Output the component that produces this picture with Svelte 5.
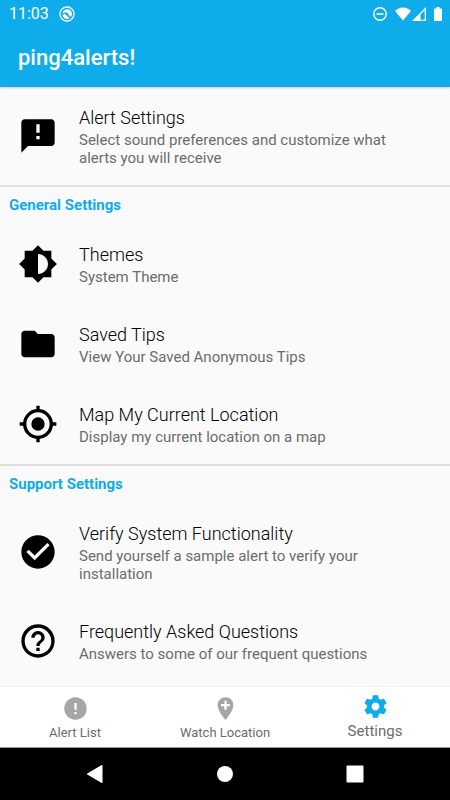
<script lang="ts">
    type Item = { icon: string; title: string; text: string };

    // Icon paths, all drawn on a 24x24 grid
    const icons: Record<string, string> = {
        feedback: 'M20 2H4c-1.1 0-2 .9-2 2v18l4-4h14c1.1 0 2-.9 2-2V4c0-1.1-.9-2-2-2zm-7 12h-2v-2h2v2zm0-4h-2V5h2v5z',
        theme: 'M20 15.31L23.31 12 20 8.69V4h-4.69L12 .69 8.69 4H4v4.69L.69 12 4 15.31V20h4.69L12 23.31 15.31 20H20v-4.69zM12 18V6c3.31 0 6 2.69 6 6s-2.69 6-6 6z',
        folder: 'M10 4H4c-1.1 0-1.99.9-1.99 2L2 18c0 1.1.9 2 2 2h16c1.1 0 2-.9 2-2V8c0-1.1-.9-2-2-2h-8l-2-2z',
        location: 'M12 8a4 4 0 1 0 0 8 4 4 0 0 0 0-8zm8.94 3A8.994 8.994 0 0 0 13 3.06V1h-2v2.06A8.994 8.994 0 0 0 3.06 11H1v2h2.06A8.994 8.994 0 0 0 11 20.94V23h2v-2.06A8.994 8.994 0 0 0 20.94 13H23v-2h-2.06zM12 19c-3.87 0-7-3.13-7-7s3.13-7 7-7 7 3.13 7 7-3.13 7-7 7z',
        check: 'M12 2C6.48 2 2 6.48 2 12s4.48 10 10 10 10-4.48 10-10S17.52 2 12 2zm-2 15l-5-5 1.41-1.41L10 14.17l7.59-7.59L19 8l-9 9z',
        help: 'M11 18h2v-2h-2v2zm1-16C6.48 2 2 6.48 2 12s4.48 10 10 10 10-4.48 10-10S17.52 2 12 2zm0 18c-4.41 0-8-3.59-8-8s3.59-8 8-8 8 3.59 8 8-3.59 8-8 8zm0-14c-2.21 0-4 1.79-4 4h2c0-1.1.9-2 2-2s2 .9 2 2c0 2-3 1.75-3 5h2c0-2.25 3-2.5 3-5 0-2.21-1.79-4-4-4z',
        alert: 'M12 2C6.48 2 2 6.48 2 12s4.48 10 10 10 10-4.48 10-10S17.52 2 12 2zm1 15h-2v-2h2v2zm0-4h-2V7h2v6z',
        watch: 'M12 2C8.14 2 5 5.14 5 9c0 5.25 7 13 7 13s7-7.75 7-13c0-3.86-3.14-7-7-7zm4 8h-3v3h-2v-3H8V8h3V5h2v3h3v2z',
        settings: 'M19.43 12.98c.04-.32.07-.64.07-.98s-.03-.66-.07-.98l2.11-1.65c.19-.15.24-.42.12-.64l-2-3.46c-.12-.22-.39-.3-.61-.22l-2.49 1c-.52-.4-1.08-.73-1.69-.98l-.38-2.65C14.46 2.18 14.25 2 14 2h-4c-.25 0-.46.18-.49.42l-.38 2.65c-.61.25-1.17.59-1.69.98l-2.49-1c-.23-.09-.49 0-.61.22l-2 3.46c-.13.22-.07.49.12.64l2.11 1.65c-.04.32-.07.65-.07.98s.03.66.07.98l-2.11 1.65c-.19.15-.24.42-.12.64l2 3.46c.12.22.39.3.61.22l2.49-1c.52.4 1.08.73 1.69.98l.38 2.65c.03.24.24.42.49.42h4c.25 0 .46-.18.49-.42l.38-2.65c.61-.25 1.17-.59 1.69-.98l2.49 1c.23.09.49 0 .61-.22l2-3.46c.12-.22.07-.49-.12-.64l-2.11-1.65zM12 15.5c-1.93 0-3.5-1.57-3.5-3.5s1.57-3.5 3.5-3.5 3.5 1.57 3.5 3.5-1.57 3.5-3.5 3.5z'
    };

    const sections: { heading: string; items: Item[] }[] = [
        {
            heading: '',
            items: [
                { icon: 'feedback', title: 'Alert Settings', text: 'Select sound preferences and customize what alerts you will receive' }
            ]
        },
        {
            heading: 'General Settings',
            items: [
                { icon: 'theme', title: 'Themes', text: 'System Theme' },
                { icon: 'folder', title: 'Saved Tips', text: 'View Your Saved Anonymous Tips' },
                { icon: 'location', title: 'Map My Current Location', text: 'Display my current location on a map' }
            ]
        },
        {
            heading: 'Support Settings',
            items: [
                { icon: 'check', title: 'Verify System Functionality', text: 'Send yourself a sample alert to verify your installation' },
                { icon: 'help', title: 'Frequently Asked Questions', text: 'Answers to some of our frequent questions' }
            ]
        }
    ];

    const tabs = [
        { icon: 'alert', label: 'Alert List' },
        { icon: 'watch', label: 'Watch Location' },
        { icon: 'settings', label: 'Settings' }
    ];

    let activeTab = $state('Settings');
</script>

<div class="app">
    <header>
        <div class="status-bar">
            <span class="time">11:03</span>
            <svg class="badge" viewBox="0 0 16 16" width="16" height="16">
                <circle cx="8" cy="8" r="7" fill="none" stroke="#fff" stroke-width="1.3" />
                <path d="M3.4 7.2C4 4.6 6 3.2 8.2 3.2c2.7 0 4.7 2.1 4.7 4.7 0 1.3-.4 2.3-1.2 3.2L8.3 7.5 6.5 6.4z" fill="#fff" />
                <path d="M3.4 9l2.4-1.3 4.9 4.5c-2.8 1.6-6.3.4-7.3-3.2z" fill="#fff" />
                <path d="M5.2 7.3l2-1.1 2.3 1.6-.3 1.3z" fill="#0facec" />
            </svg>
            <div class="status-icons">
                <svg viewBox="0 0 14 14" width="14" height="14">
                    <circle cx="7" cy="7" r="6.2" fill="none" stroke="#fff" stroke-width="1.4" />
                    <path d="M3.5 7h7" stroke="#fff" stroke-width="1.5" />
                </svg>
                <svg class="wifi" viewBox="0 0 16 14" width="16" height="14">
                    <path d="M8 13.5L0 4C2.3 1.7 5 .5 8 .5s5.7 1.2 8 3.5z" fill="#fff" />
                </svg>
                <svg class="signal" viewBox="0 0 14 14" width="14" height="14">
                    <path fill-rule="evenodd" d="M0 14L14 0v14zM8.5 12.7h4.2V3.3L8.5 7.5z" fill="#fff" />
                </svg>
                <svg class="battery" viewBox="0 0 8 14" width="8" height="14">
                    <path d="M2.5 0h3v1.5h1.7c.5 0 .8.3.8.8v10.9c0 .5-.3.8-.8.8H.8c-.5 0-.8-.3-.8-.8V2.3c0-.5.3-.8.8-.8h1.7z" fill="#fff" />
                </svg>
            </div>
        </div>
        <h1>ping4alerts!</h1>
    </header>

    <main>
        {#each sections as section}
            <section>
                {#if section.heading}
                    <h2>{section.heading}</h2>
                {/if}
                {#each section.items as item}
                    <button class="row">
                        <svg class="row-icon" viewBox="0 0 24 24"><path d={icons[item.icon]} /></svg>
                        <span class="row-body">
                            <span class="row-title">{item.title}</span>
                            <span class="row-text">{item.text}</span>
                        </span>
                    </button>
                {/each}
            </section>
        {/each}
    </main>

    <nav class="tabs">
        {#each tabs as tab}
            <button class="tab" class:active={activeTab === tab.label} onclick={() => (activeTab = tab.label)}>
                <svg viewBox="0 0 24 24" width="27" height="27"><path d={icons[tab.icon]} /></svg>
                <span>{tab.label}</span>
            </button>
        {/each}
    </nav>

    <div class="system-nav">
        <button aria-label="Back">
            <svg viewBox="0 0 18 18" width="18" height="18"><path d="M16.5.6v16.800c0 .5-.4.7-.8.5L1.3 9.6c-.5-.3-.5-.9 0-1.200L15.7.1c.4-.2.8 0 .8.5z" /></svg>
        </button>
        <button aria-label="Home">
            <svg viewBox="0 0 18 18" width="18" height="18"><circle cx="9" cy="9" r="8" /></svg>
        </button>
        <button aria-label="Overview">
            <svg viewBox="0 0 18 18" width="18" height="18"><rect x="0.5" y="0.5" width="17" height="17" rx="1" /></svg>
        </button>
    </div>
</div>

<style>
    :global(body) {
        margin: 0;
        background: #fafafa;
    }

    .app {
        display: flex;
        flex-direction: column;
        min-height: 100vh;
        font-family: Roboto, "Liberation Sans", sans-serif;
        background: #fafafa;
        color: #000;
    }

    button {
        border: 0;
        margin: 0;
        padding: 0;
        background: none;
        font: inherit;
        color: inherit;
        cursor: pointer;
    }

    svg {
        display: block;
        flex: none;
    }

    header {
        background: #0facec;
        color: #fff;
        box-shadow: 0 1px 2px rgba(0, 0, 0, 0.2);
    }

    .status-bar {
        display: flex;
        align-items: center;
        height: 27px;
        padding: 0 8px 0 9px;
    }

    .time {
        font-size: 16px;
        line-height: 27px;
    }

    .badge {
        margin-left: 10px;
    }

    .status-icons {
        display: flex;
        align-items: center;
        margin-left: auto;
    }

    .wifi {
        margin-left: 8px;
    }

    .signal {
        margin-left: 1px;
    }

    .battery {
        margin-left: 8px;
    }

    h1 {
        margin: 0;
        padding: 2px 18px 0;
        font-size: 22px;
        font-weight: 500;
        line-height: 58px;
    }

    main {
        flex: 1;
    }

    section + section {
        border-top: 2px solid #e0e0e0;
    }

    h2 {
        margin: 0;
        padding: 0 9px;
        font-size: 15px;
        font-weight: 700;
        line-height: 37px;
        color: #0facec;
    }

    .row {
        display: flex;
        align-items: center;
        gap: 21px;
        width: 100%;
        padding: 18px 36px 18px 18px;
        text-align: left;
    }

    .row-icon {
        width: 40px;
        height: 40px;
    }

    .row-title,
    .row-text {
        display: block;
    }

    .row-title {
        font-size: 18px;
        font-weight: 300;
        line-height: 26px;
    }

    .row-text {
        font-size: 15px;
        line-height: 18px;
        color: #6c6c6c;
    }

    .tabs {
        display: flex;
        background: #fff;
        border-top: 1px solid #f0f0f0;
        border-bottom: 1px solid #999;
    }

    .tab {
        flex: 1;
        display: flex;
        flex-direction: column;
        align-items: center;
        padding: 8px 0 4px;
        font-size: 13px;
        line-height: 20px;
        color: #6c6c6c;
    }

    .tab svg {
        margin-bottom: 1px;
        fill: #a6a6a6;
    }

    .tab.active {
        padding: 6px 0;
        font-size: 15px;
    }

    .tab.active svg {
        fill: #0facec;
    }

    .system-nav {
        display: flex;
        justify-content: center;
        gap: 47px;
        height: 52px;
        background: #000;
    }

    .system-nav button {
        display: flex;
        align-items: center;
        justify-content: center;
        width: 83px;
    }

    .system-nav svg {
        fill: #fff;
    }
</style>
